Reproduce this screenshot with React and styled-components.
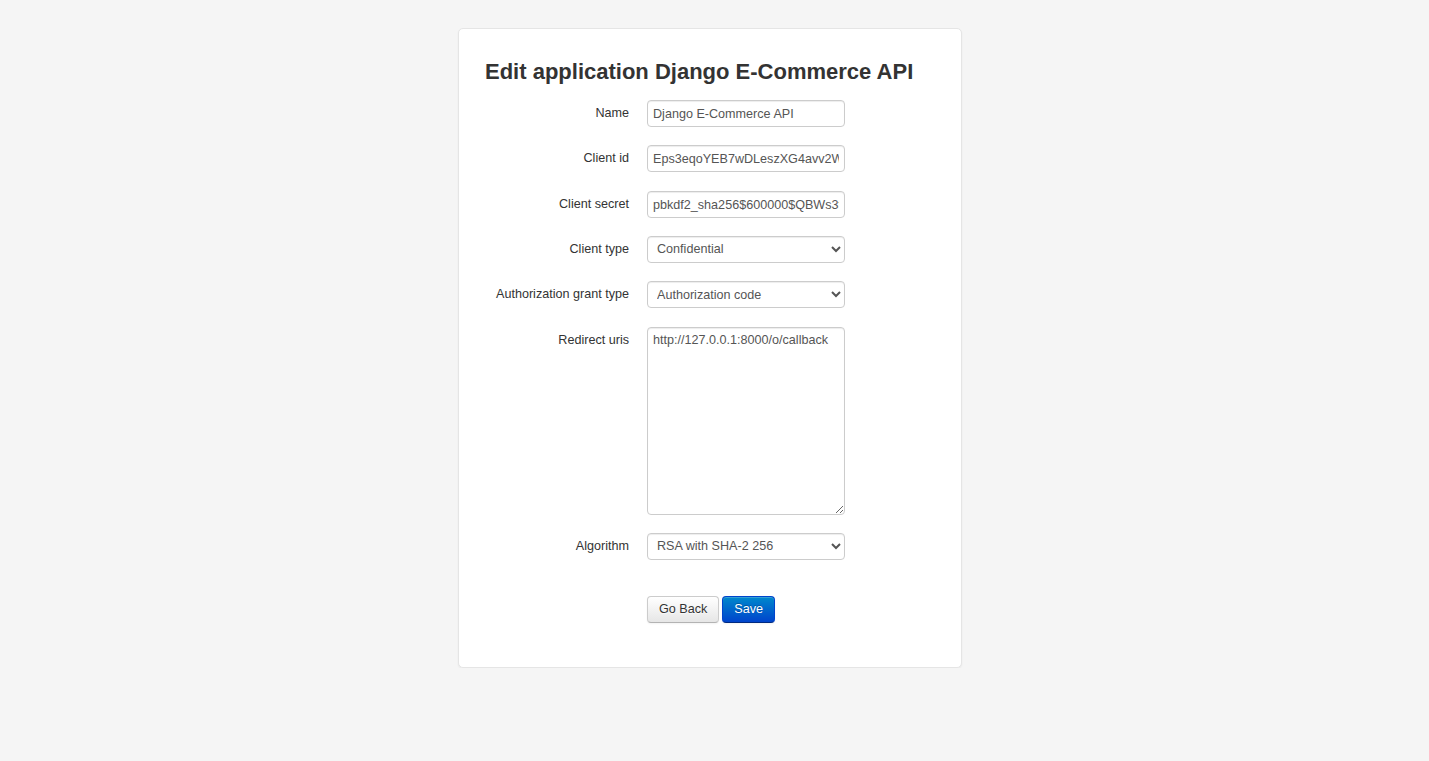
import React from 'react';
import styled, { createGlobalStyle } from 'styled-components';

const GlobalStyle = createGlobalStyle`
  html, body {
    margin: 0;
    padding: 0;
    background: #f5f5f5;
  }
  body {
    font-family: "Liberation Sans", Arial, Helvetica, sans-serif;
    font-size: 12.6px;
    color: #333;
  }
`;

const Page = styled.div`
  display: flex;
  justify-content: center;
  padding: 28px 9px 0 0;
`;

const Card = styled.div`
  width: 502px;
  box-sizing: content-box;
  background: #fff;
  border: 1px solid #e5e5e5;
  border-radius: 5px;
  box-shadow: 0 1px 2px rgba(0, 0, 0, 0.05);
  padding: 23px 0 44px 0;
`;

const Title = styled.h3`
  margin: 0 0 8px 26px;
  font-size: 22px;
  line-height: 40px;
  font-weight: bold;
  color: #333;
`;

const Form = styled.form`
  display: flex;
  flex-direction: column;
  gap: 18.33px;
`;

const Row = styled.div`
  display: grid;
  grid-template-columns: 170px 198px;
  column-gap: 18px;
  align-items: start;
`;

const Label = styled.label`
  text-align: right;
  line-height: 27px;
  color: #333;
  white-space: nowrap;
`;

const fieldBase = `
  box-sizing: border-box;
  width: 198px;
  height: 27px;
  margin: 0;
  border: 1px solid #ccc;
  border-radius: 4px;
  background: #fff;
  color: #555;
  font-family: "Liberation Sans", Arial, Helvetica, sans-serif;
  font-size: 12.6px;
  box-shadow: inset 0 1px 1px rgba(0, 0, 0, 0.075);
  outline: none;
`;

const Input = styled.input`
  ${fieldBase}
  padding: 5px 5px 4px;
`;

const Select = styled.select`
  ${fieldBase}
  padding: 0 2px 0 5px;
`;

const TextArea = styled.textarea`
  ${fieldBase}
  height: 188px;
  padding: 4px 5px;
  line-height: 17px;
  resize: both;
`;

const Actions = styled.div`
  display: flex;
  gap: 3px;
  margin: 18px 0 0 188px;
`;

const Button = styled.button`
  box-sizing: border-box;
  height: 27px;
  padding: 0 11px;
  border-radius: 4px;
  font-family: "Liberation Sans", Arial, Helvetica, sans-serif;
  font-size: 12.6px;
  line-height: 25px;
  cursor: pointer;
  color: ${p => (p.primary ? '#fff' : '#333')};
  text-shadow: ${p => (p.primary ? '0 -1px 0 rgba(0,0,0,0.25)' : '0 1px 1px rgba(255,255,255,0.75)')};
  background: ${p => (p.primary
    ? 'linear-gradient(to bottom, #0088cc, #0044cc)'
    : 'linear-gradient(to bottom, #ffffff, #e6e6e6)')};
  border: 1px solid ${p => (p.primary ? '#0044cc' : '#cccccc')};
  border-bottom-color: ${p => (p.primary ? '#002a80' : '#b3b3b3')};
  box-shadow: inset 0 1px 0 rgba(255, 255, 255, 0.2), 0 1px 2px rgba(0, 0, 0, 0.05);
`;

const fields = [
  { label: 'Name', type: 'input', value: 'Django E-Commerce API' },
  { label: 'Client id', type: 'input', value: 'Eps3eqoYEB7wDLeszXG4avv2WkQh5Ry1PjNfD0Jc' },
  { label: 'Client secret', type: 'input', value: 'pbkdf2_sha256$600000$QBWs3fH1kzq9' },
  { label: 'Client type', type: 'select', value: 'Confidential', options: ['Confidential', 'Public'] },
  {
    label: 'Authorization grant type',
    type: 'select',
    value: 'Authorization code',
    options: ['Authorization code', 'Implicit', 'Resource owner password-based', 'Client credentials', 'OpenID connect hybrid'],
  },
  { label: 'Redirect uris', type: 'textarea', value: 'http://127.0.0.1:8000/o/callback' },
  {
    label: 'Algorithm',
    type: 'select',
    value: 'RSA with SHA-2 256',
    options: ['No OIDC support', 'RSA with SHA-2 256', 'HMAC with SHA-2 256'],
  },
];

function Field({ field }) {
  if (field.type === 'select') {
    return (
      <Select defaultValue={field.value}>
        {field.options.map(o => <option key={o}>{o}</option>)}
      </Select>
    );
  }
  if (field.type === 'textarea') {
    return <TextArea defaultValue={field.value} />;
  }
  return <Input type="text" defaultValue={field.value} />;
}

export default function App() {
  return (
    <>
      <GlobalStyle />
      <Page>
        <Card>
          <Title>Edit application Django E-Commerce API</Title>
          <Form onSubmit={e => e.preventDefault()}>
            {fields.map(f => (
              <Row key={f.label}>
                <Label>{f.label}</Label>
                <Field field={f} />
              </Row>
            ))}
            <Actions>
              <Button type="button">Go Back</Button>
              <Button type="submit" primary>Save</Button>
            </Actions>
          </Form>
        </Card>
      </Page>
    </>
  );
}
